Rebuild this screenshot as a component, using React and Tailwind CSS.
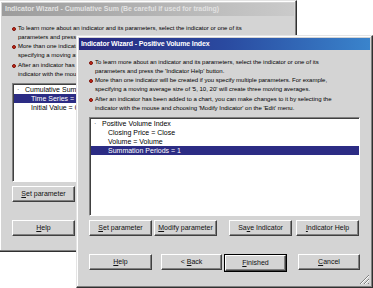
import React from "react";

const btn =
  "h-[16px] flex items-center justify-center bg-[#d4d4d4] border border-t-white border-l-white border-r-[#404040] border-b-[#404040] shadow-[inset_-1px_-1px_0_#808080] text-[7px] text-[#111]";

function Btn({ children, className = "" }) {
  return <div className={`${btn} ${className}`}>{children}</div>;
}

function Bullet({ lines, className = "" }) {
  return (
    <div className={`flex ${className}`}>
      <div className="w-[6px] shrink-0 pt-[3px]">
        <div className="w-[4px] h-[4px] rounded-full bg-[#d02a1c] border border-[#7a1208]" />
      </div>
      <div className="whitespace-nowrap">
        {lines.map((l, i) => (
          <div key={i}>{l}</div>
        ))}
      </div>
    </div>
  );
}

function Wizard({ title, active, items, pos }) {
  return (
    <div
      className={`absolute ${pos} bg-[#d4d4d4] border border-t-[#e4e4e4] border-l-[#e4e4e4] border-r-[#303030] border-b-[#303030] shadow-[inset_-1px_-1px_0_#808080,inset_1px_1px_0_#ffffff] flex flex-col`}
    >
      <div
        className={
          active
            ? "mx-[2px] mt-[2px] h-[12px] flex items-center pl-[2px] bg-gradient-to-r from-[#27277f] via-[#2a4aa0] to-[#3a84cc] text-white font-bold text-[7px] tracking-[-0.15px] whitespace-nowrap"
            : "mx-[2px] mt-[2px] h-[13px] flex items-center pl-[3px] bg-gradient-to-r from-[#9c9c9c] to-[#cacaca] text-[#e2e2e2] font-bold text-[7px] tracking-[-0.05px] whitespace-nowrap"
        }
      >
        {title}
      </div>

      <div className="px-[12px] flex flex-col">
        <div className="mt-[8px] text-[6px] leading-[9px] text-black">
          <Bullet
            lines={[
              "To learn more about an indicator and its parameters, select the indicator or one of its",
              "parameters and press the 'Indicator Help' button.",
            ]}
          />
          <Bullet
            lines={[
              "More than one indicator will be created if you specify multiple parameters.  For example,",
              "specifying a moving average size of '5, 10, 20' will create three moving averages.",
            ]}
          />
          <Bullet
            className="mt-[1px]"
            lines={[
              "After an indicator has been added to a chart, you can make changes to it by selecting the",
              "indicator with the mouse and choosing 'Modify Indicator' on the 'Edit' menu.",
            ]}
          />
        </div>

        <div className="mt-[4px] h-[99px] bg-white border border-t-[#808080] border-l-[#808080] border-r-white border-b-white shadow-[inset_1px_1px_0_#404040] pt-[1px] pl-[1px] text-[7px] leading-[9px] text-black">
          {items.map((it, i) => (
            <div
              key={i}
              className={`h-[9px] flex items-center whitespace-nowrap ${
                it.sel ? "bg-[#2c2c84] text-white" : ""
              }`}
            >
              {it.root ? (
                <>
                  <span className="w-[8px] pl-[3px] text-[#606060]">·</span>
                  <span className="pl-[3px]">{it.text}</span>
                </>
              ) : (
                <span className="pl-[17px]">{it.text}</span>
              )}
            </div>
          ))}
        </div>

        <div className="mt-[4px] flex">
          <Btn className="w-[63px]">
            <span><u>S</u>et parameter</span>
          </Btn>
          <Btn className="w-[63px] ml-[2px]">
            <span><u>M</u>odify parameter</span>
          </Btn>
          <Btn className="w-[63px] ml-[12px]">
            <span>Sa<u>v</u>e Indicator</span>
          </Btn>
          <Btn className="w-[63px] ml-[4px]">
            <span><u>I</u>ndicator Help</span>
          </Btn>
        </div>

        <div className="mt-[18px] flex">
          <Btn className="w-[63px]">
            <span><u>H</u>elp</span>
          </Btn>
          <Btn className="w-[61px] ml-[9px]">
            <span>&lt; <u>B</u>ack</span>
          </Btn>
          <div className="w-[63px] ml-[2px] border border-black">
            <Btn className="w-full h-[14px]">
              <span><u>F</u>inished</span>
            </Btn>
          </div>
          <Btn className="w-[62px] ml-[11px]">
            <span><u>C</u>ancel</span>
          </Btn>
        </div>
      </div>

      {active && (
        <svg
          className="absolute right-[2px] bottom-[2px]"
          width="11"
          height="11"
          viewBox="0 0 11 11"
        >
          <path d="M10 1 L1 10 M10 5 L5 10 M10 9 L9 10" stroke="#808080" strokeWidth="1" />
          <path d="M10 2 L2 10 M10 6 L6 10" stroke="#ffffff" strokeWidth="1" />
        </svg>
      )}
    </div>
  );
}

export default function App() {
  return (
    <div className="relative w-[373px] h-[288px] overflow-hidden bg-white font-['Liberation_Sans',Arial,sans-serif]">
      <Wizard
        pos="left-[-1px] top-[0px] w-[298px] h-[252px]"
        title="Indicator Wizard - Cumulative Sum (Be careful if used for trading)"
        items={[
          { text: "Cumulative Sum", root: true },
          { text: "Time Series = Close", sel: true },
          { text: "Initial Value = 0" },
        ]}
      />
      <Wizard
        active
        pos="left-[76px] top-[35px] w-[297px] h-[253px]"
        title="Indicator Wizard - Positive Volume Index"
        items={[
          { text: "Positive Volume Index", root: true },
          { text: "Closing Price = Close" },
          { text: "Volume = Volume" },
          { text: "Summation Periods = 1", sel: true },
        ]}
      />
    </div>
  );
}
